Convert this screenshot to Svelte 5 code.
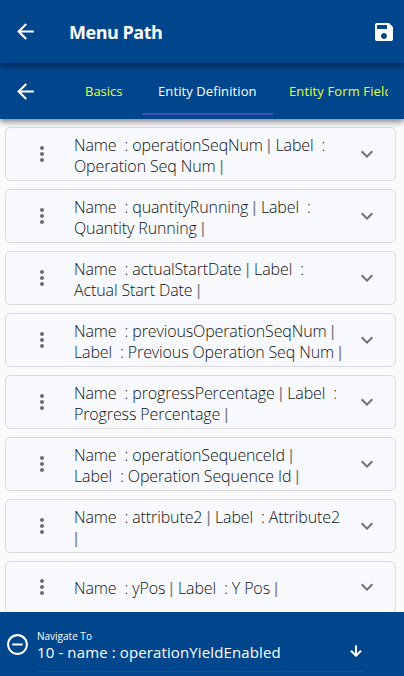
<script>
  const rows = [
    ['Name  : operationSeqNum | Label  :', 'Operation Seq Num |'],
    ['Name  : quantityRunning | Label  :', 'Quantity Running |'],
    ['Name  : actualStartDate | Label  :', 'Actual Start Date |'],
    ['Name  : previousOperationSeqNum |', 'Label  : Previous Operation Seq Num |'],
    ['Name  : progressPercentage | Label  :', 'Progress Percentage |'],
    ['Name  : operationSequenceId |', 'Label  : Operation Sequence Id |'],
    ['Name  : attribute2 | Label  : Attribute2', '|'],
    ['Name  : yPos | Label  : Y Pos |']
  ];
  const parts = (line) => line.split(/(\|)/);
</script>

{#snippet back()}
  <svg class="back" viewBox="0 0 24 24"><path d="M20 11H7.83l5.59-5.59L12 4l-8 8 8 8 1.41-1.41L7.83 13H20v-2z" /></svg>
{/snippet}

<div class="screen">
  <header class="bar">
    {@render back()}
    <h1>Menu Path</h1>
    <svg class="save" viewBox="0 0 24 24"><path d="M17 3H5c-1.11 0-2 .9-2 2v14c0 1.1.89 2 2 2h14c1.1 0 2-.9 2-2V7l-4-4zm-5 16c-1.66 0-3-1.34-3-3s1.34-3 3-3 3 1.34 3 3-1.34 3-3 3zm3-10H5V5h10v4z" /></svg>
  </header>
  <nav class="tabs">
    {@render back()}
    <div class="strip">
      <span class="tab basics">Basics</span>
      <span class="tab active">Entity Definition</span>
      <span class="tab fields">Entity Form Fields</span>
    </div>
  </nav>
  <main>
    {#each rows as lines}
      <section class="card" class:single={lines.length === 1}>
        <svg class="more" viewBox="0 0 24 24"><path d="M12 8c1.1 0 2-.9 2-2s-.9-2-2-2-2 .9-2 2 .9 2 2 2zm0 2c-1.1 0-2 .9-2 2s.9 2 2 2 2-.9 2-2-.9-2-2-2zm0 6c-1.1 0-2 .9-2 2s.9 2 2 2 2-.9 2-2-.9-2-2-2z" /></svg>
        <div class="text">
          {#each lines as line}
            <div>{#each parts(line) as part}{#if part === '|'}<span class="pipe">|</span>{:else}{part}{/if}{/each}</div>
          {/each}
        </div>
        <svg class="chevron" viewBox="0 0 24 24"><path d="M16.59 8.59L12 13.17 7.41 8.59 6 10l6 6 6-6z" /></svg>
      </section>
    {/each}
  </main>
  <footer>
    <svg class="minus" viewBox="0 0 24 24"><path d="M7 11v2h10v-2H7zm5-9C6.48 2 2 6.48 2 12s4.48 10 10 10 10-4.48 10-10S17.52 2 12 2zm0 18c-4.41 0-8-3.59-8-8s3.59-8 8-8 8 3.59 8 8-3.59 8-8 8z" /></svg>
    <div class="field">
      <div class="copy">
        <div class="label">Navigate To</div>
        <div class="value">10 - name : operationYieldEnabled</div>
      </div>
      <svg class="down" viewBox="0 0 12 12"><path d="M6 0.5V10.5M1 5.7L6 10.7L11 5.7" /></svg>
    </div>
  </footer>
</div>

<style>
  :global(body) { background: #fafafa; }
  .screen { width: 404px; height: 676px; display: flex; flex-direction: column; overflow: hidden; font-family: "Open Sans", "Noto Sans", sans-serif; color: #101214; background: #fafafa; }
  svg { display: block; flex: none; fill: currentColor; }
  .bar { height: 63px; flex: none; box-sizing: border-box; background: #00468c; color: #fff; display: flex; align-items: center; padding: 0 8px 0 13px; z-index: 3; box-shadow: 0 2px 4px -1px #0003, 0 4px 5px #0024, 0 1px 10px #0000001f; }
  .back { width: 25px; height: 25px; }
  h1 { font-size: 18px; line-height: 24px; font-weight: 700; margin: 0 0 0 31px; flex: 1; letter-spacing: -.48px; }
  .save { width: 24px; height: 24px; }
  .tabs { height: 56px; flex: none; box-sizing: border-box; background: #00468c; color: #fff; display: flex; align-items: center; padding-left: 13px; z-index: 2; box-shadow: 0 2px 4px -1px #0003, 0 4px 5px #0024, 0 1px 10px #0000001f; }
  .strip { height: 48px; margin: 0 16px 0 27px; flex: 1; min-width: 0; display: flex; overflow: hidden; }
  .tab { flex: none; box-sizing: border-box; height: 48px; line-height: 49px; font-size: 13px; white-space: nowrap; color: #e4ff3c; }
  .basics { width: 77px; padding-left: 20px; letter-spacing: -.02px; }
  .active { width: 131px; padding-left: 16px; color: #fff; border-bottom: 2px solid #3f51b5; letter-spacing: .1px; }
  .fields { padding-left: 16px; letter-spacing: .12px; }
  main { flex: 1; min-height: 0; overflow: hidden; padding: 8px 8px 0 5px; display: flex; flex-direction: column; gap: 8px; }
  .card { height: 54px; flex: none; box-sizing: border-box; border: 1px solid #d8dade; border-radius: 5px; background: #f8f9fc; display: flex; align-items: center; padding: 0 16px 0 24px; }
  .single { height: 52px; }
  .more { width: 24px; height: 24px; color: #6c6c6f; }
  .text { margin-left: 20px; flex: 1; font-size: 16px; font-weight: 300; line-height: 21px; letter-spacing: -.12px; white-space: nowrap; padding-top: 3px; }
  .text div { white-space: pre; height: 21px; }
  .pipe { font-family: "Liberation Sans", sans-serif; line-height: 1; letter-spacing: .4px; color: #77797c; }
  .chevron { width: 24px; height: 24px; color: #707173; }
  footer { height: 64px; flex: none; box-sizing: border-box; background: #00468c; color: #fff; display: flex; align-items: center; padding-left: 5px; }
  .minus { width: 25px; height: 25px; }
  .field { width: 327px; height: 44px; box-sizing: border-box; margin: 12px 0 0 7px; display: flex; border-bottom: 1px solid #104f90; }
  .copy { flex: 1; white-space: nowrap; }
  .label { font-size: 10px; line-height: 14px; margin-top: 1px; }
  .value { font-size: 15px; line-height: 20px; letter-spacing: .12px; margin-top: -1px; }
  .down { width: 12px; height: 12px; margin: 17px 2px 0 0; fill: none; stroke: #fff; stroke-width: 2; }
</style>
